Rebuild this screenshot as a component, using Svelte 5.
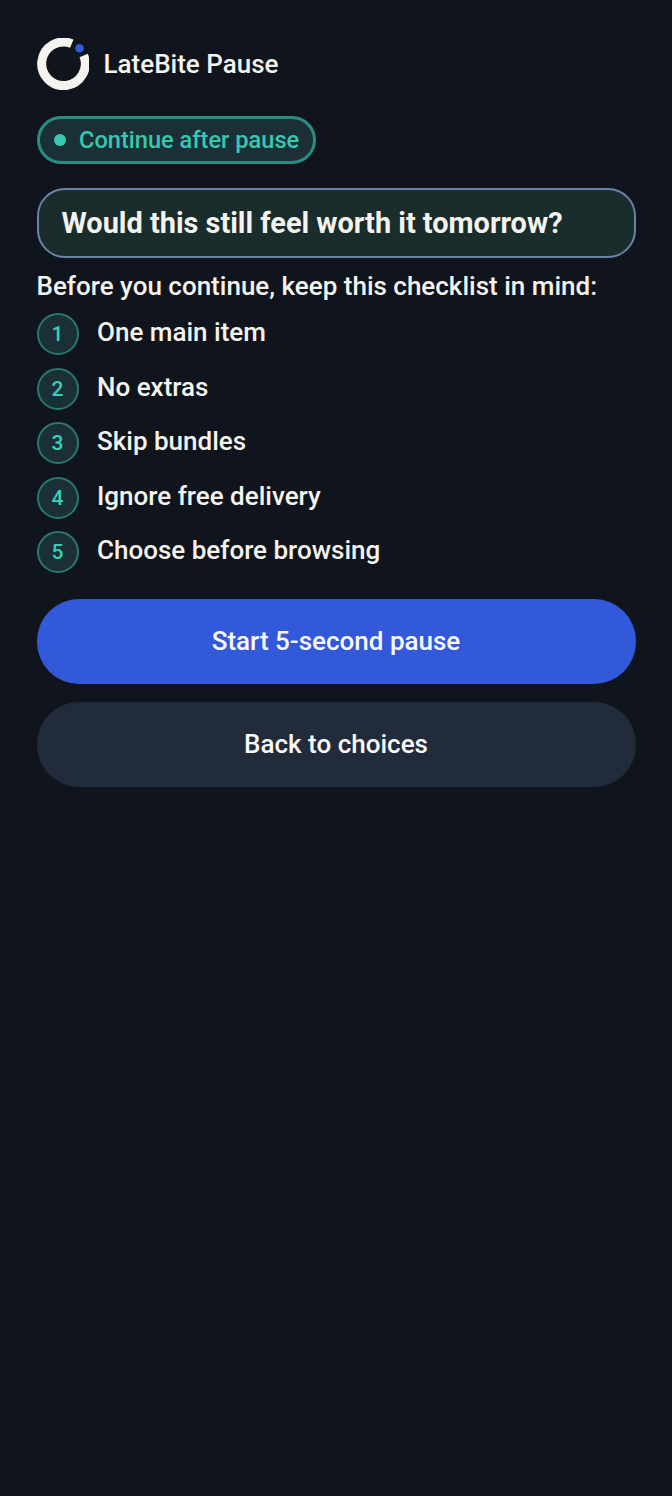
<script lang="ts">
    const steps = [
        "One main item",
        "No extras",
        "Skip bundles",
        "Ignore free delivery",
        "Choose before browsing",
    ];
</script>

<main class="page">
    <header class="brand">
        <svg class="logo" width="52" height="52" viewBox="0 0 52 52" fill="none">
            <path
                d="M46.66 17.5 A21.8 21.8 0 1 1 34.8 5.64"
                stroke="#f5f3ee"
                stroke-width="9"
            />
            <circle cx="42.5" cy="10.3" r="4.3" fill="#3159d9" />
        </svg>
        <span class="brand-name">LateBite Pause</span>
    </header>

    <div class="status">
        <span class="status-dot"></span>
        <span>Continue after pause</span>
    </div>

    <h1 class="question">Would this still feel worth it tomorrow?</h1>

    <p class="intro">Before you continue, keep this checklist in mind:</p>

    <ol class="steps">
        {#each steps as step, i}
            <li class="step">
                <span class="step-num">{i + 1}</span>
                <span class="step-text">{step}</span>
            </li>
        {/each}
    </ol>

    <div class="actions">
        <button class="btn primary">Start 5-second pause</button>
        <button class="btn secondary">Back to choices</button>
    </div>
</main>

<style>
    :global(body) {
        background: #10151d;
    }

    .page {
        min-height: 1496px;
        box-sizing: border-box;
        padding: 38px 36.5px 0;
        background: #10151d;
        color: #f5f3ee;
        font-family: Roboto, "Liberation Sans", sans-serif;
    }

    .brand {
        display: flex;
        align-items: center;
        gap: 15px;
    }

    .logo {
        flex-shrink: 0;
    }

    .brand-name {
        font-size: 26px;
        font-weight: 500;
        line-height: 52px;
    }

    .status {
        display: inline-flex;
        align-items: center;
        gap: 13px;
        box-sizing: border-box;
        height: 48px;
        margin-top: 26px;
        padding: 0 14px 0 14.5px;
        background: #1a3036;
        border: 3px solid #2a8d84;
        border-radius: 24px;
        color: #36c8b2;
        font-size: 23.6px;
        font-weight: 500;
    }

    .status-dot {
        width: 12px;
        height: 12px;
        border-radius: 50%;
        background: #36c8b2;
    }

    .question {
        box-sizing: border-box;
        height: 70px;
        margin: 24px 0 0;
        padding: 0 23px;
        display: flex;
        align-items: center;
        background: #182d2c;
        border: 2px solid #6a82a6;
        border-radius: 28px;
        font-size: 28.9px;
        font-weight: 700;
    }

    .intro {
        margin: 12px 0 0;
        font-size: 26px;
        font-weight: 500;
        line-height: 32px;
    }

    .steps {
        list-style: none;
        margin: 11px 0 0;
        padding: 0;
        display: flex;
        flex-direction: column;
        gap: 12.5px;
    }

    .step {
        display: flex;
        align-items: flex-start;
        gap: 18.5px;
        height: 42px;
    }

    .step-num {
        box-sizing: border-box;
        width: 42px;
        height: 42px;
        display: flex;
        align-items: center;
        justify-content: center;
        background: #1a3036;
        border: 2px solid #2a7770;
        border-radius: 50%;
        color: #38d0b8;
        font-size: 21px;
        font-weight: 500;
    }

    .step-text {
        padding-top: 1px;
        font-size: 26px;
        font-weight: 500;
        line-height: 36px;
    }

    .actions {
        display: flex;
        flex-direction: column;
        gap: 18px;
        margin-top: 26px;
    }

    .btn {
        height: 85px;
        padding: 0 0 2px;
        border: none;
        border-radius: 42px;
        color: #f8f8f8;
        font-family: inherit;
        font-size: 26px;
        font-weight: 500;
    }

    .primary {
        background: #3159d9;
    }

    .secondary {
        background: #212b3a;
    }
</style>
